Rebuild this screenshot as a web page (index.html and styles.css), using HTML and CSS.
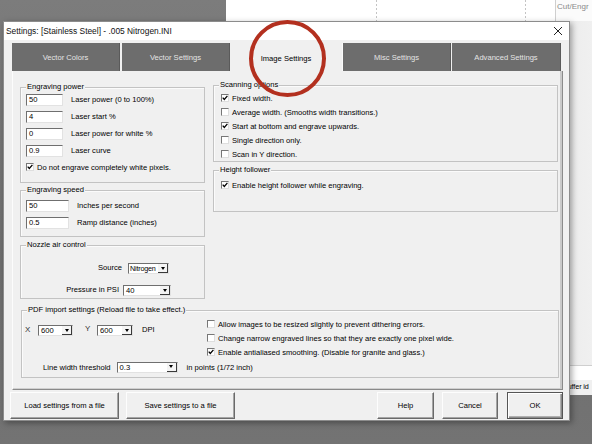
FILE: index.html
```html
<!DOCTYPE html>
<html>
<head>
<meta charset="utf-8">
<title>Settings</title>
<link rel="stylesheet" href="styles.css">
</head>
<body>
<div class="screen">
  <div class="bgapp">
    <div class="bg-canvas"></div>
    <div class="bg-side">
      <div class="side-top">Cut/Engr</div>
      <div class="side-fill"></div>
      <div class="side-white"></div>
      <div class="side-row">Buffer id</div>
    </div>
  </div>

  <div class="dialog">
    <div class="titlebar">
      <span class="title">Settings: [Stainless Steel] - .005 Nitrogen.INI</span>
      <svg class="close" viewBox="0 0 10 10" width="10" height="10"><path d="M1 1 L9 9 M9 1 L1 9" stroke="#222" stroke-width="1" fill="none"/></svg>
    </div>

    <div class="tabs">
      <div class="tab t1">Vector Colors</div>
      <div class="tab t2">Vector Settings</div>
      <div class="tab sel">Image Settings</div>
      <div class="tab t4">Misc Settings</div>
      <div class="tab t5">Advanced Settings</div>
    </div>

    <div class="panel">
      <div class="top-grid">
        <div class="col-left">
          <div class="group g-power">
            <span class="gtitle">Engraving power</span>
            <div class="frow"><span class="field w37">50</span><span class="flabel">Laser power (0 to 100%)</span></div>
            <div class="frow"><span class="field w37">4</span><span class="flabel">Laser start %</span></div>
            <div class="frow"><span class="field w37">0</span><span class="flabel">Laser power for white %</span></div>
            <div class="frow"><span class="field w37">0.9</span><span class="flabel">Laser curve</span></div>
            <div class="crow c-white"><span class="cb"><svg viewBox="0 0 6 6" width="6" height="6"><path d="M0.7 2.6 L2.3 4.4 L5.4 0.9" fill="none" stroke="#000" stroke-width="1.3"/></svg></span><span>Do not engrave completely white pixels.</span></div>
          </div>

          <div class="group g-speed">
            <span class="gtitle">Engraving speed</span>
            <div class="frow"><span class="field w43">50</span><span class="flabel">Inches per second</span></div>
            <div class="frow"><span class="field w43">0.5</span><span class="flabel">Ramp distance (inches)</span></div>
          </div>

          <div class="group g-nozzle">
            <span class="gtitle">Nozzle air control</span>
            <div class="nrow n1"><span class="nlabel">Source</span><span class="combo w41"><span class="cval tight">Nitrogen</span><span class="cbtn"><i class="arrow"></i></span></span></div>
            <div class="nrow n2"><span class="nlabel">Pressure in PSI</span><span class="combo w48"><span class="cval">40</span><span class="cbtn"><i class="arrow"></i></span></span></div>
          </div>
        </div>

        <div class="col-right">
          <div class="group g-scan">
            <span class="gtitle">Scanning options</span>
            <div class="crow"><span class="cb"><svg viewBox="0 0 6 6" width="6" height="6"><path d="M0.7 2.6 L2.3 4.4 L5.4 0.9" fill="none" stroke="#000" stroke-width="1.3"/></svg></span><span>Fixed width.</span></div>
            <div class="crow"><span class="cb"></span><span>Average width. (Smooths width transitions.)</span></div>
            <div class="crow"><span class="cb"><svg viewBox="0 0 6 6" width="6" height="6"><path d="M0.7 2.6 L2.3 4.4 L5.4 0.9" fill="none" stroke="#000" stroke-width="1.3"/></svg></span><span>Start at bottom and engrave upwards.</span></div>
            <div class="crow"><span class="cb"></span><span>Single direction only.</span></div>
            <div class="crow"><span class="cb"></span><span>Scan in Y direction.</span></div>
          </div>

          <div class="group g-height">
            <span class="gtitle">Height follower</span>
            <div class="crow"><span class="cb"><svg viewBox="0 0 6 6" width="6" height="6"><path d="M0.7 2.6 L2.3 4.4 L5.4 0.9" fill="none" stroke="#000" stroke-width="1.3"/></svg></span><span>Enable height follower while engraving.</span></div>
          </div>
        </div>
      </div>

      <div class="group g-pdf">
        <span class="gtitle">PDF import settings (Reload file to take effect.)</span>
        <div class="pdf-top">
          <div class="pdf-left">
            <div class="xyrow">
              <span class="xl">X</span>
              <span class="combo w35"><span class="cval">600</span><span class="cbtn"><i class="arrow"></i></span></span>
              <span class="yl">Y</span>
              <span class="combo w36"><span class="cval">600</span><span class="cbtn"><i class="arrow"></i></span></span>
              <span class="dpi">DPI</span>
            </div>
          </div>
          <div class="pdf-right">
            <div class="crow"><span class="cb"></span><span>Allow images to be resized slightly to prevent dithering errors.</span></div>
            <div class="crow"><span class="cb"></span><span>Change narrow engraved lines so that they are exactly one pixel wide.</span></div>
            <div class="crow"><span class="cb"><svg viewBox="0 0 6 6" width="6" height="6"><path d="M0.7 2.6 L2.3 4.4 L5.4 0.9" fill="none" stroke="#000" stroke-width="1.3"/></svg></span><span>Enable antialiased smoothing. (Disable for granite and glass.)</span></div>
          </div>
        </div>
        <div class="lwrow">
          <span>Line width threshold</span>
          <span class="combo w61"><span class="cval">0.3</span><span class="cbtn"><i class="arrow"></i></span></span>
          <span class="unit">in points (1/72 inch)</span>
        </div>
      </div>
    </div>

    <div class="buttons">
      <div class="btn b-load">Load settings from a file</div>
      <div class="btn b-save">Save settings to a file</div>
      <div class="spacer"></div>
      <div class="btn b-help">Help</div>
      <div class="btn b-cancel">Cancel</div>
      <div class="btn b-ok">OK</div>
    </div>
  </div>

  <div class="annot"></div>
</div>
</body>
</html>
```

FILE: styles.css
```css
* { box-sizing: border-box; }
html, body { margin: 0; padding: 0; }
body {
  font-family: "Liberation Sans", Arial, sans-serif;
  font-size: 7.6px;
  color: #000;
}
.screen {
  position: relative;
  width: 592px;
  height: 444px;
  overflow: hidden;
  background: linear-gradient(180deg, #7c7c7c 0%, #6e6e6e 60%, #737373 100%);
}

/* background application */
.bgapp {
  position: absolute;
  left: 226px;
  top: 0;
  width: 366px;
  height: 395px;
  display: flex;
  background: #fff;
}
.bg-canvas {
  flex: 1;
  background:
    linear-gradient(#c4c4c4 50%, transparent 50%) 150px 0 / 1px 4px repeat-y,
    linear-gradient(#c4c4c4 50%, transparent 50%) 299px 0 / 1px 4px repeat-y,
    #fff;
}
.bg-side {
  width: 37px;
  border-left: 1px solid #cfcfcf;
  display: flex;
  flex-direction: column;
}
.side-top {
  height: 21px;
  background: #fbfbfb;
  color: #8a8a8a;
  font-size: 8px;
  padding: 2px 0 0 1px;
  white-space: nowrap;
}
.side-fill {
  flex: 1;
  background: linear-gradient(90deg, #d8d8d8 0px, #ececec 10px, #f0f0f0 100%);
}
.side-white {
  height: 15px;
  background: #fff;
  border-top: 1px solid #cfcfcf;
}
.side-row {
  height: 15px;
  background: #f0f0f0;
  padding: 2px 0 0 7px;
  white-space: nowrap;
  font-size: 7.2px;
  letter-spacing: -0.1px;
}

/* dialog */
.dialog {
  position: absolute;
  left: 3px;
  top: 21px;
  width: 567px;
  height: 400px;
  background: #f0f0f0;
  border: 1px solid #8c8c8c;
  box-shadow: 2px 2px 6px rgba(0,0,0,0.35);
  display: flex;
  flex-direction: column;
}
.titlebar {
  height: 18px;
  background: #fff;
  display: flex;
  align-items: center;
  justify-content: space-between;
  padding: 0 6px 0 2px;
}
.title {
  font-size: 8.4px;
  color: #111;
}
.close { display: block; margin-top: 0; }

.tabs {
  display: flex;
  margin: 3px 0 0 8px;
  height: 28px;
}
.tab {
  height: 28px;
  display: flex;
  align-items: center;
  justify-content: center;
  background: #6d6d6d;
  color: #e4e4e4;
  border-right: 1px solid #5a5a5a;
}
.t1 { width: 108px; }
.t2 { width: 108px; margin-left: 2px; }
.sel {
  width: 112px;
  background: #f0f0f0;
  color: #000;
  border-right: none;
  padding-top: 2px;
}
.t4 { width: 109px; border-left: 1px solid #fafafa; }
.t5 { width: 109px; margin-left: 1px; }

.panel {
  margin-left: 8px;
  width: 551px;
  height: 319px;
  border-left: 1px solid #fcfcfc;
  border-right: 1px solid #8a8a8a;
  border-bottom: 1px solid #8a8a8a;
  box-shadow: inset -2px 0 0 #c9c9c9, inset 0 -1px 0 #d0d0d0;
  padding: 14px 0 0 7px;
}
.top-grid {
  display: grid;
  grid-template-columns: 185px 345px;
  column-gap: 8px;
  align-items: start;
}
.col-left { margin-top: 2px; }

.group {
  position: relative;
  border: 1px solid #c3c3c3;
  box-shadow: inset 1px 1px 0 #fbfbfb;
}
.gtitle {
  position: absolute;
  top: -6px;
  left: 5px;
  padding: 0 1px;
  background: #f0f0f0;
  line-height: 10px;
  white-space: nowrap;
}

.frow {
  display: flex;
  align-items: center;
  height: 12px;
  margin-bottom: 5px;
  padding-left: 5px;
}
.flabel { margin-left: 8px; margin-top: -2px; white-space: nowrap; }
.field {
  display: block;
  height: 12px;
  background: #fff;
  border-top: 1px solid #6f6f6f;
  border-left: 1px solid #6f6f6f;
  border-right: 1px solid #e2e2e2;
  border-bottom: 1px solid #e2e2e2;
  padding-left: 2px;
  line-height: 10px;
}
.w37 { width: 37px; }
.w43 { width: 43px; }

.g-power { height: 96px; padding-top: 6px; }
.c-white { margin-top: 5px; padding-left: 5px; }
.g-speed { height: 47px; margin-top: 7px; padding-top: 9px; }
.g-nozzle { height: 54px; margin-top: 8px; padding-top: 17px; }

.nrow { display: flex; align-items: center; height: 11px; }
.n2 { margin-top: 11px; }
.nlabel { text-align: right; white-space: nowrap; margin-top: -3px; }
.n1 .nlabel { width: 101px; margin-right: 6px; }
.n2 .nlabel { width: 98px; margin-right: 4px; }

.combo {
  display: flex;
  height: 11px;
  background: #fff;
  border-top: 1px solid #6f6f6f;
  border-left: 1px solid #6f6f6f;
  border-right: 1px solid #e2e2e2;
  border-bottom: 1px solid #e2e2e2;
}
.cval {
  flex: 1;
  padding-left: 2px;
  line-height: 9px;
  white-space: nowrap;
  overflow: hidden;
}
.cval.tight {
  padding-left: 1px;
  font-size: 7.2px;
  letter-spacing: -0.2px;
  overflow: visible;
}
.cbtn {
  width: 10px;
  height: 9px;
  flex: none;
  background: #f4f4f4;
  border-right: 1px solid #3a3a3a;
  border-bottom: 1px solid #3a3a3a;
  display: flex;
  align-items: center;
  justify-content: center;
}
.arrow {
  display: block;
  width: 0;
  height: 0;
  border-left: 2.5px solid transparent;
  border-right: 2.5px solid transparent;
  border-top: 3px solid #000;
}
.w41 { width: 41px; }
.w48 { width: 48px; }
.w35 { width: 35px; }
.w36 { width: 36px; }
.w61 { width: 61px; height: 11px; }

.crow {
  display: flex;
  align-items: center;
  height: 14px;
  white-space: nowrap;
}
.cb {
  display: flex;
  align-items: center;
  justify-content: center;
  width: 8px;
  height: 8px;
  flex: none;
  background: #fff;
  border-top: 1px solid #777;
  border-left: 1px solid #777;
  border-right: 1px solid #dedede;
  border-bottom: 1px solid #dedede;
  margin-right: 3px;
}
.cb svg { display: block; }
.c-white { height: 10px; }

.g-scan { height: 77px; padding: 5px 0 0 7px; }
.g-height { height: 42px; margin-top: 8px; padding: 7px 0 0 7px; }

.g-pdf {
  width: 538px;
  height: 68px;
  margin: 11px 0 0 1px;
  padding-top: 6px;
}
.pdf-top { display: flex; }
.pdf-left { width: 185px; padding-left: 3px; }
.xyrow {
  display: flex;
  align-items: center;
  height: 11px;
  margin-top: 8px;
  white-space: nowrap;
}
.xl { width: 13px; margin-top: -2px; font-size: 8px; color: #333; }
.yl { margin-left: 12px; width: 12px; margin-top: -5px; font-size: 8px; color: #333; }
.dpi { margin-left: 9px; margin-top: -2px; }
.lwrow {
  display: flex;
  align-items: center;
  height: 12px;
  margin-top: 2px;
  padding-left: 21px;
  white-space: nowrap;
}
.lwrow .combo { margin-left: 6px; }
.unit { margin-left: 9px; }

.buttons {
  display: flex;
  margin-top: 2px;
  height: 27px;
  padding: 0 6px;
}
.spacer { flex: 1; }
.btn {
  height: 27px;
  display: flex;
  align-items: center;
  justify-content: center;
  background: #f0f0f0;
  border: 1px solid;
  border-color: #fdfdfd #6a6a6a #6a6a6a #fdfdfd;
  box-shadow: inset -1px -1px 0 #a5a5a5;
  white-space: nowrap;
}
.b-load { width: 109px; }
.b-save { width: 109px; margin-left: 7px; }
.b-help { width: 57px; }
.b-cancel { width: 56px; margin-left: 8px; }
.b-ok {
  width: 56px;
  margin-left: 9px;
  border: 1px solid #555;
  box-shadow: inset 1px 1px 0 #fff, inset -1px -1px 0 #8a8a8a, inset -2px -2px 0 #b0b0b0;
}

/* red annotation circle over the screenshot */
.annot {
  position: absolute;
  left: 249px;
  top: 20px;
  width: 77px;
  height: 77px;
  border: 4px solid #b3301f;
  border-radius: 50%;
}
```
